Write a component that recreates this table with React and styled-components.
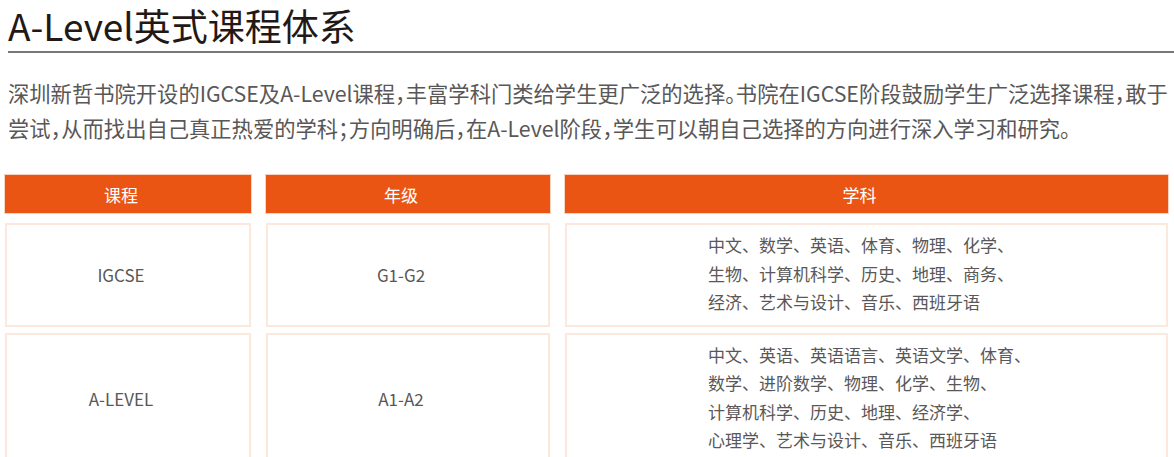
import React from 'react'
import styled, { createGlobalStyle } from 'styled-components'

const GlobalStyle = createGlobalStyle`
  html, body {
    margin: 0;
    padding: 0;
    background: #fff;
  }
  body {
    font-family: "Noto Sans CJK SC", "Noto Sans", sans-serif;
  }
`;

const rows = [
  {
    course: 'IGCSE',
    grade: 'G1-G2',
    subjects: [
      '中文、数学、英语、体育、物理、化学、',
      '生物、计算机科学、历史、地理、商务、',
      '经济、艺术与设计、音乐、西班牙语',
    ],
  },
  {
    course: 'A-LEVEL',
    grade: 'A1-A2',
    subjects: [
      '中文、英语、英语语言、英语文学、体育、',
      '数学、进阶数学、物理、化学、生物、',
      '计算机科学、历史、地理、经济学、',
      '心理学、艺术与设计、音乐、西班牙语',
    ],
  },
];

export default function App() {
  return (
    <Page>
      <GlobalStyle />
      <Title>A-Level英式课程体系</Title>
      <Intro>
        深圳新哲书院开设的IGCSE及A-Level课程，丰富学科门类给学生更广泛的选择。书院在IGCSE阶段鼓励学生广泛选择课程，敢于
        <br />
        尝试，从而找出自己真正热爱的学科；方向明确后，在A-Level阶段，学生可以朝自己选择的方向进行深入学习和研究。
      </Intro>
      <Table>
        <HeadRow>
          <HeadCell>课程</HeadCell>
          <HeadCell>年级</HeadCell>
          <HeadCell>学科</HeadCell>
        </HeadRow>
        {rows.map((r, i) => (
          <BodyRow key={r.course} $first={i === 0}>
            <Cell>{r.course}</Cell>
            <Cell>{r.grade}</Cell>
            <Cell $list>
              <SubjectList>
                {r.subjects.map(s => (
                  <div key={s}>{s}</div>
                ))}
              </SubjectList>
            </Cell>
          </BodyRow>
        ))}
      </Table>
    </Page>
  )
}

const Page = styled.div`
  padding: 0 0 0 8px;
  width: 1174px;
  box-sizing: border-box;
`;

const Title = styled.h1`
  margin: 0;
  font-size: 37px;
  font-weight: 400;
  line-height: 50px;
  color: #231815;
  padding-bottom: 1px;
  border-bottom: 2px solid #777;
`;

const Intro = styled.p`
  margin: 22px 0 0;
  font-size: 21.3px;
  line-height: 35px;
  color: #595757;
  white-space: nowrap;
  font-feature-settings: "halt";
`;

const Table = styled.div`
  margin: 30px 0 0 -3px;
  display: flex;
  flex-direction: column;
`;

const columns = `
  display: grid;
  grid-template-columns: 246px 284px 603px;
  column-gap: 15px;
`;

const HeadRow = styled.div`
  ${columns}
`;

const HeadCell = styled.div`
  height: 38px;
  background: #ea5514;
  box-shadow: 0 0 0 1px #f9d3bf;
  color: #fff;
  font-size: 17px;
  display: flex;
  align-items: center;
  justify-content: center;
  padding-right: 14px;
`;

const BodyRow = styled.div`
  ${columns}
  margin-top: ${p => (p.$first ? '10px' : '6px')};
`;

const Cell = styled.div`
  box-sizing: border-box;
  border: 2px solid #fde8de;
  min-height: 103px;
  padding: ${p => (p.$list ? '6px 0 8px 141px' : '8px 14px 8px 0')};
  color: #595757;
  font-size: 17px;
  display: flex;
  align-items: center;
  justify-content: ${p => (p.$list ? 'flex-start' : 'center')};
`;

const SubjectList = styled.div`
  line-height: 28.5px;
  text-align: left;
`;
